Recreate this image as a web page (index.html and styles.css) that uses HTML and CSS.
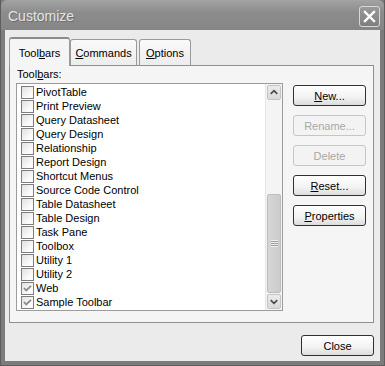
FILE: index.html
```html
<!DOCTYPE html>
<html lang="en">
  <head>
    <meta charset="utf-8">
    <title>Customize</title>
    <link rel="stylesheet" href="styles.css">
  </head>
  <body>
    <div class="window">
      <div class="titlebar">
        <span class="title">Customize</span>
        <span class="close-x">
          <svg width="21" height="21" viewBox="0 0 21 21">
            <path d="M6 6 L15 15 M15 6 L6 15" stroke="#ffffff" stroke-width="2.4" stroke-linecap="square" fill="none"/>
          </svg>
        </span>
      </div>

      <div class="client">
        <div class="tabs">
          <div class="tab active">Tool<u>b</u>ars</div>
          <div class="tab tab-commands"><u>C</u>ommands</div>
          <div class="tab tab-options"><u>O</u>ptions</div>
        </div>

        <div class="panel">
          <div class="panel-left">
            <div class="field-label">Tool<u>b</u>ars:</div>
            <div class="listbox">
              <ul class="items">
                <li><span class="check"></span>PivotTable</li>
                <li><span class="check"></span>Print Preview</li>
                <li><span class="check"></span>Query Datasheet</li>
                <li><span class="check"></span>Query Design</li>
                <li><span class="check"></span>Relationship</li>
                <li><span class="check"></span>Report Design</li>
                <li><span class="check"></span>Shortcut Menus</li>
                <li><span class="check"></span>Source Code Control</li>
                <li><span class="check"></span>Table Datasheet</li>
                <li><span class="check"></span>Table Design</li>
                <li><span class="check"></span>Task Pane</li>
                <li><span class="check"></span>Toolbox</li>
                <li><span class="check"></span>Utility 1</li>
                <li><span class="check"></span>Utility 2</li>
                <li><span class="check checked"><svg width="11" height="11" viewBox="0 0 11 11"><path d="M2 5 L4.3 7.5 L9 2.8" stroke="#8a8a8a" stroke-width="1.8" fill="none"/></svg></span>Web</li>
                <li><span class="check checked"><svg width="11" height="11" viewBox="0 0 11 11"><path d="M2 5 L4.3 7.5 L9 2.8" stroke="#8a8a8a" stroke-width="1.8" fill="none"/></svg></span>Sample Toolbar</li>
              </ul>
              <div class="scrollbar">
                <div class="sb-btn">
                  <svg width="15" height="15" viewBox="0 0 15 15"><path d="M4 9 L7.5 5.5 L11 9" stroke="#4a4a4a" stroke-width="1.8" fill="none"/></svg>
                </div>
                <div class="sb-track"></div>
                <div class="sb-thumb"><span class="grip"></span></div>
                <div class="sb-btn">
                  <svg width="15" height="15" viewBox="0 0 15 15"><path d="M4 6 L7.5 9.5 L11 6" stroke="#4a4a4a" stroke-width="1.8" fill="none"/></svg>
                </div>
              </div>
            </div>
          </div>

          <div class="panel-buttons">
            <button class="btn"><u>N</u>ew...</button>
            <button class="btn" disabled>Rename...</button>
            <button class="btn" disabled>Delete</button>
            <button class="btn"><u>R</u>eset...</button>
            <button class="btn"><u>P</u>roperties</button>
          </div>
        </div>

        <div class="footer">
          <button class="btn btn-close">Close</button>
        </div>
      </div>
    </div>
  </body>
</html>
```

FILE: styles.css
```css
body {
  margin: 0;
  background: #ffffff;
  font-family: "Liberation Sans", Arial, sans-serif;
  font-size: 11px;
  color: #000000;
}
.window {
  width: 385px;
  height: 366px;
  box-sizing: border-box;
  display: flex;
  flex-direction: column;
  padding: 0 4px 4px;
  background: #7c7c7c;
  border: 1px solid #5e5e5e;
  border-top: none;
}
.titlebar {
  height: 30px;
  margin: 0 -4px;
  padding: 0 4px 0 7px;
  display: flex;
  align-items: center;
  justify-content: space-between;
  background: linear-gradient(#a3a3a3, #8d8d8d 40%, #858585);
  border-radius: 6px 6px 0 0;
}
.title {
  font-size: 14px;
  color: #e4e4e4;
  text-shadow: 1px 1px 0 #6e6e6e;
  padding-top: 2px;
}
.close-x {
  width: 21px;
  height: 21px;
  box-sizing: border-box;
  border: 1px solid #d8d8d8;
  border-radius: 3px;
  background: linear-gradient(#9a9a9a, #7e7e7e);
  display: flex;
  align-items: center;
  justify-content: center;
  margin-top: 2px;
}
.close-x svg {
  margin: -1px;
}
.client {
  flex: 1;
  background: #ebebeb;
  padding: 7px 6px 0 4px;
  display: flex;
  flex-direction: column;
}
.tabs {
  height: 28px;
  display: flex;
  align-items: flex-end;
}
.tab {
  height: 26px;
  box-sizing: border-box;
  border: 1px solid #9a9a9a;
  border-bottom: none;
  border-radius: 3px 3px 0 0;
  background: linear-gradient(#fafafa, #ececec);
  display: flex;
  align-items: center;
  justify-content: center;
  padding-top: 1px;
}
.tab.active {
  width: 61px;
  height: 29px;
  margin-bottom: -1px;
  position: relative;
  z-index: 1;
  background: #f5f5f5;
  border-top: 2px solid #8c8c8c;
  padding-top: 0;
}
.tab-commands {
  width: 67px;
  margin-left: 0;
}
.tab-options {
  width: 52px;
  margin-left: 2px;
}
.panel {
  height: 258px;
  box-sizing: border-box;
  border: 1px solid #8f8f8f;
  background: #f5f5f5;
  display: flex;
  padding: 1px 0 0 6px;
}
.field-label {
  line-height: 14px;
  padding-left: 1px;
  margin-bottom: 2px;
}
.listbox {
  width: 267px;
  height: 228px;
  box-sizing: border-box;
  border: 1px solid #9c9c9c;
  background: #ffffff;
  display: flex;
}
.items {
  flex: 1;
  list-style: none;
  margin: 0;
  padding: 1px 0 0 0;
}
.items li {
  height: 14px;
  display: flex;
  align-items: center;
  padding-left: 4px;
  white-space: nowrap;
}
.check {
  width: 13px;
  height: 13px;
  box-sizing: border-box;
  border: 1px solid #7d7d7d;
  background: linear-gradient(135deg, #e0e0e0, #fbfbfb 70%);
  margin-right: 2px;
  display: flex;
  align-items: center;
  justify-content: center;
}
.scrollbar {
  width: 17px;
  box-sizing: border-box;
  padding: 1px;
  background: #f4f4f4;
  border-left: 1px solid #e6e6e6;
  display: flex;
  flex-direction: column;
}
.sb-btn {
  height: 15px;
  box-sizing: border-box;
  border: 1px solid #c4c4c4;
  border-radius: 2px;
  background: linear-gradient(#ececec, #d9d9d9);
  display: flex;
  align-items: center;
  justify-content: center;
}
.sb-btn svg {
  margin: -1px;
}
.sb-track {
  flex: 1;
}
.sb-thumb {
  height: 99px;
  box-sizing: border-box;
  border: 1px solid #bdbdbd;
  border-radius: 2px;
  background: linear-gradient(90deg, #d6d6d6, #cbcbcb);
  display: flex;
  align-items: center;
  justify-content: center;
  margin-bottom: 1px;
}
.grip {
  width: 7px;
  height: 7px;
  background: repeating-linear-gradient(#f2f2f2 0 1px, #9c9c9c 1px 2px);
}
.panel-buttons {
  display: flex;
  flex-direction: column;
  gap: 9px;
  padding: 18px 0 0 10px;
}
.btn {
  width: 73px;
  height: 21px;
  box-sizing: border-box;
  border: 1px solid #303030;
  border-radius: 3px;
  background: linear-gradient(#ffffff, #f2f2f2 60%, #dcdcdc);
  font-family: "Liberation Sans", Arial, sans-serif;
  font-size: 11px;
  color: #000000;
  padding: 0;
}
.btn:disabled {
  border-color: #c6c6c6;
  background: #f3f3f3;
  color: #a8a8a8;
}
.footer {
  display: flex;
  justify-content: flex-end;
  padding-top: 12px;
}
```
